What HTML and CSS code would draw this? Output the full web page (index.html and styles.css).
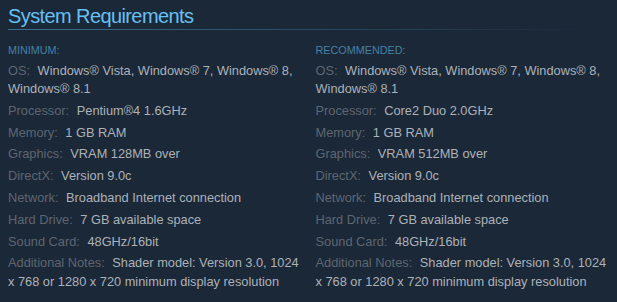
FILE: index.html
```html
<!DOCTYPE html>
<html>
<head>
<meta charset="utf-8">
<link rel="stylesheet" href="styles.css">
</head>
<body>
<div class="sysreq">
  <h2 class="title">System Requirements</h2>
  <div class="cols">
    <div class="col">
      <div class="heading">MINIMUM:</div>
      <ul class="list">
        <li><span class="label">OS:</span> Windows® Vista, Windows® 7, Windows® 8, Windows® 8.1</li>
        <li><span class="label">Processor:</span> Pentium®4 1.6GHz</li>
        <li><span class="label">Memory:</span> 1 GB RAM</li>
        <li><span class="label">Graphics:</span> VRAM 128MB over</li>
        <li><span class="label">DirectX:</span> Version 9.0c</li>
        <li><span class="label">Network:</span> Broadband Internet connection</li>
        <li><span class="label">Hard Drive:</span> 7 GB available space</li>
        <li><span class="label">Sound Card:</span> 48GHz/16bit</li>
        <li><span class="label">Additional Notes:</span> Shader model: Version 3.0, 1024 x 768 or 1280 x 720 minimum display resolution</li>
      </ul>
    </div>
    <div class="col">
      <div class="heading">RECOMMENDED:</div>
      <ul class="list">
        <li><span class="label">OS:</span> Windows® Vista, Windows® 7, Windows® 8, Windows® 8.1</li>
        <li><span class="label">Processor:</span> Core2 Duo 2.0GHz</li>
        <li><span class="label">Memory:</span> 1 GB RAM</li>
        <li><span class="label">Graphics:</span> VRAM 512MB over</li>
        <li><span class="label">DirectX:</span> Version 9.0c</li>
        <li><span class="label">Network:</span> Broadband Internet connection</li>
        <li><span class="label">Hard Drive:</span> 7 GB available space</li>
        <li><span class="label">Sound Card:</span> 48GHz/16bit</li>
        <li><span class="label">Additional Notes:</span> Shader model: Version 3.0, 1024 x 768 or 1280 x 720 minimum display resolution</li>
      </ul>
    </div>
  </div>
</div>
</body>
</html>
```

FILE: styles.css
```css
html, body {
  margin: 0;
  background: #1b2838;
}
body {
  padding: 0 8px;
  font-family: "Liberation Sans", Arial, sans-serif;
  color: #acb2b8;
}
.title {
  margin: 0;
  padding-top: 3px;
  padding-bottom: 1px;
  font-size: 20px;
  letter-spacing: -0.6px;
  font-weight: normal;
  line-height: 26px;
  color: #66c0f4;
  background: linear-gradient(to right, #3b6e8c 0%, rgba(59,110,140,0) 97%) no-repeat left bottom / 100% 1px;
}
.cols {
  display: grid;
  grid-template-columns: 1fr 1fr;
  column-gap: 14px;
  padding-top: 12.5px;
}
.heading {
  font-size: 10.8px;
  line-height: 14px;
  color: #4582a5;
  margin-bottom: 5px;
}
.list {
  list-style: none;
  margin: 0;
  padding: 0;
}
.list li {
  font-size: 12.8px;
  line-height: 18.5px;
  margin-bottom: 3.3px;
}
.label {
  color: #5d6670;
  margin-right: 4px;
}
```
